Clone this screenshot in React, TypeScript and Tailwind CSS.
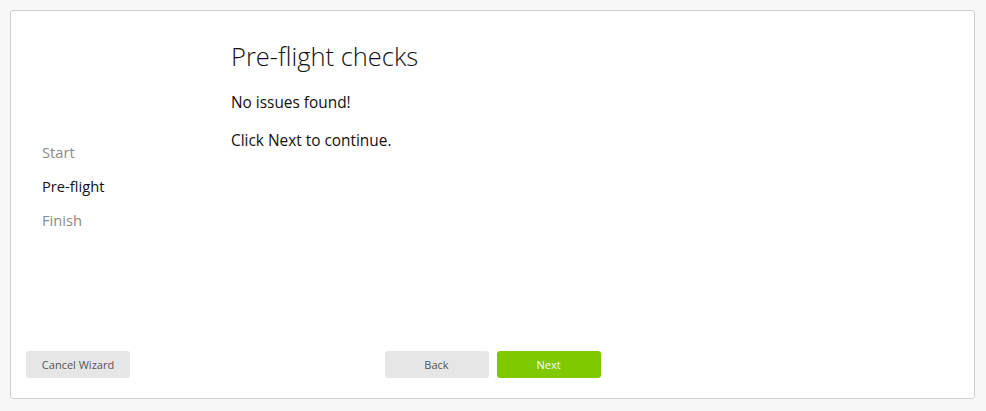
import React from 'react';

const STEPS = [
    { label: 'Start', active: false },
    { label: 'Pre-flight', active: true },
    { label: 'Finish', active: false },
];

export default function App() {
    return (
        <div
            className="w-[986px] h-[411px] bg-[#f7f7f7] pt-[10px] pl-[10px] pr-[11px]"
            style={{ fontFamily: '"Open Sans", "Liberation Sans", sans-serif' }}
        >
            <div className="h-[389px] bg-white border border-[#cfcfcf] rounded-[3px] flex flex-col">
                {/* body */}
                <div className="flex flex-1">
                    <nav className="w-[220px] pl-[31px] pt-[124px] flex flex-col">
                        {STEPS.map(step => (
                            <div
                                key={step.label}
                                className={`text-[14.7px] leading-[34px] ${step.active ? 'text-[#111]' : 'text-[#8a8a8a]'}`}
                            >
                                {step.label}
                            </div>
                        ))}
                    </nav>
                    <div className="flex-1 pt-[27px] text-[#111]">
                        <h1 className="text-[25.5px] leading-[36px] font-light">Pre-flight checks</h1>
                        <p className="mt-[17px] text-[15.4px] leading-[24px]">No issues found!</p>
                        <p className="mt-[14px] text-[15.4px] leading-[24px]">Click Next to continue.</p>
                    </div>
                </div>

                {/* footer */}
                <div className="grid grid-cols-[1fr_auto_1fr] items-center px-[15px] pb-[20px]">
                    <div>
                        <button className="w-[104px] h-[27px] pt-[1px] rounded-[3px] bg-[#e6e6e6] text-[11px] leading-[26px] text-[#555]">
                            Cancel Wizard
                        </button>
                    </div>
                    <div className="flex gap-[8px]">
                        <button className="w-[104px] h-[27px] pt-[1px] rounded-[3px] bg-[#e6e6e6] text-[11px] leading-[26px] text-[#555]">
                            Back
                        </button>
                        <button className="w-[104px] h-[27px] pt-[1px] rounded-[3px] bg-[#80c800] text-[11px] leading-[26px] text-white">
                            Next
                        </button>
                    </div>
                    <div />
                </div>
            </div>
        </div>
    );
}
